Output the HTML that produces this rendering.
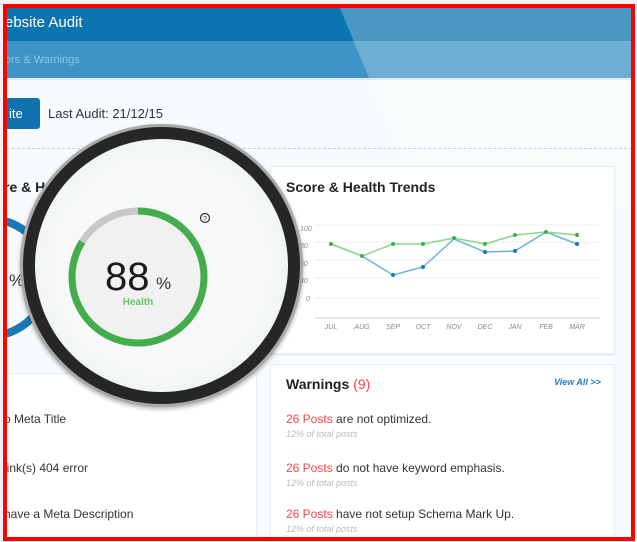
<!DOCTYPE html>
<html><head><style>
*{margin:0;padding:0;box-sizing:border-box}
body{width:637px;height:542px;overflow:hidden;background:#f0f0f0;font-family:"Liberation Sans",sans-serif;position:relative}
.frame{position:absolute;left:3px;top:4px;width:632px;height:537px;border:4px solid #f00;background:#f7fbfd;overflow:hidden}
.a{position:absolute}
</style></head><body>
<div class="frame">
 <div class="a" style="left:0;top:0;width:640px;height:33px;background:#0c74af"></div>
 <div class="a" style="left:0;top:33px;width:640px;height:37px;background:#3d94c5"></div>
 <svg class="a" style="left:0;top:0" width="630" height="200"><polygon points="333,0 640,0 640,70 362,70" fill="#fff" opacity="0.25"/><polygon points="362,70 640,70 640,200 420,200" fill="#fff" opacity="0.25"/></svg>
 <div class="a" style="left:0;top:70px;width:640px;height:2px;background:#e3e8eb"></div>
 <div class="a" style="left:-2px;top:6px;color:#fff;font-size:15px">ebsite Audit</div>
 <div class="a" style="left:-2px;top:46px;color:#8cc4e6;font-size:11px">ors &amp; Warnings</div>
 <div class="a" style="left:-10px;top:90px;width:43px;height:31px;background:#1272b0;border-radius:3px;color:#fff;font-size:13px;line-height:31px;padding-left:12px">ite</div>
 <div class="a" style="left:41px;top:98px;color:#333;font-size:13px">Last Audit: 21/12/15</div>
 <div class="a" style="left:0;top:140px;width:630px;border-top:1px dashed #ccd">&nbsp;</div>
 <div class="a" style="left:-10px;top:158px;width:264px;height:190px;background:#f7fbfd"></div>
 <div class="a" style="left:-3px;top:171px;color:#222;font-size:14px;font-weight:bold">re &amp; Health</div>
 <div class="a" style="left:-80px;top:207px;width:125px;height:125px;border-radius:50%;border:8px solid #1a79b5"></div>
 <div class="a" style="left:2px;top:263px;color:#333;font-size:17px">%</div>
 <div class="a" style="left:-10px;top:365px;width:260px;height:180px;background:#fff;border:1px solid #e8edf0"></div>
 <div class="a" style="left:220px;top:370px;color:#2a7dbf;font-size:10px;font-style:italic">&gt;&gt;</div>
 <div class="a" style="left:-3px;top:404px;color:#333;font-size:12px">o Meta Title</div>
 <div class="a" style="left:-3px;top:453px;color:#333;font-size:12px">link(s) 404 error</div>
 <div class="a" style="left:-3px;top:499px;color:#333;font-size:12px">have a Meta Description</div>
 <div class="a" style="left:263px;top:158px;width:345px;height:188px;background:#fff;border:1px solid #e8edf0;box-shadow:0 1px 2px #e3e7ea"></div>
 <div class="a" style="left:279px;top:171px;color:#222;font-size:14px;font-weight:bold">Score &amp; Health Trends</div>
 <svg class="a" style="left:263px;top:158px" width="345" height="188">
  <g stroke="#eee" stroke-width="1">
   <line x1="45" y1="59" x2="330" y2="59"/><line x1="45" y1="76" x2="330" y2="76"/><line x1="45" y1="94" x2="330" y2="94"/><line x1="45" y1="112" x2="330" y2="112"/><line x1="45" y1="132" x2="330" y2="132"/>
  </g>
  <line x1="45" y1="152" x2="330" y2="152" stroke="#ccc"/>
  <g font-size="7" font-style="italic" fill="#888" font-family="Liberation Sans">
   <text x="30" y="65">100</text><text x="30" y="82">80</text><text x="30" y="100">60</text><text x="30" y="117">40</text><text x="36" y="135">0</text>
  </g>
  <g font-size="7" font-style="italic" fill="#888" text-anchor="middle" font-family="Liberation Sans">
   <text x="61" y="163">JUL</text><text x="92" y="163">AUG</text><text x="123" y="163">SEP</text><text x="153" y="163">OCT</text><text x="184" y="163">NOV</text><text x="215" y="163">DEC</text><text x="245" y="163">JAN</text><text x="276" y="163">FEB</text><text x="307" y="163">MAR</text>
  </g>
  <polyline fill="none" stroke="#6db3e0" stroke-width="1.5" points="61,78 92,90 123,109 153,101 184,73 215,86 245,85 276,66 307,78"/>
  <polyline fill="none" stroke="#8cd68c" stroke-width="1.5" points="61,78 92,90 123,78 153,78 184,72 215,78 245,69 276,66 307,69"/>
  <g fill="#1b75bb"><circle cx="123" cy="109" r="2"/><circle cx="153" cy="101" r="2"/><circle cx="215" cy="86" r="2"/><circle cx="245" cy="85" r="2"/><circle cx="307" cy="78" r="2"/></g>
  <g fill="#3fae49"><circle cx="61" cy="78" r="2"/><circle cx="92" cy="90" r="2"/><circle cx="123" cy="78" r="2"/><circle cx="153" cy="78" r="2"/><circle cx="184" cy="72" r="2"/><circle cx="215" cy="78" r="2"/><circle cx="245" cy="69" r="2"/><circle cx="276" cy="66" r="2"/><circle cx="307" cy="69" r="2"/></g>
 </svg>
 <div class="a" style="left:263px;top:356px;width:345px;height:190px;background:#fff;border:1px solid #e8edf0"></div>
 <div class="a" style="left:279px;top:368px;color:#222;font-size:14px;font-weight:bold">Warnings <span style="color:#f44;font-weight:normal">(9)</span></div>
 <div class="a" style="left:547px;top:369px;color:#2a7dbf;font-size:9px;font-style:italic;font-weight:bold">View All &gt;&gt;</div>
 <div class="a" style="left:279px;top:404px;color:#333;font-size:12px"><span style="color:#f44">26 Posts</span> are not optimized.</div>
 <div class="a" style="left:279px;top:421px;color:#bbb;font-size:9px;font-style:italic">12% of total posts</div>
 <div class="a" style="left:279px;top:453px;color:#333;font-size:12px"><span style="color:#f44">26 Posts</span> do not have keyword emphasis.</div>
 <div class="a" style="left:279px;top:470px;color:#bbb;font-size:9px;font-style:italic">12% of total posts</div>
 <div class="a" style="left:279px;top:499px;color:#333;font-size:12px"><span style="color:#f44">26 Posts</span> have not setup Schema Mark Up.</div>
 <div class="a" style="left:279px;top:516px;color:#bbb;font-size:9px;font-style:italic">12% of total posts</div>
 <div class="a" style="left:13px;top:116px;width:283px;height:283px;border-radius:50%;background:#a9a9a9;box-shadow:0 2px 4px rgba(0,0,0,.3)"></div>
 <div class="a" style="left:16px;top:119px;width:277px;height:277px;border-radius:50%;background:#262626"></div>
 <div class="a" style="left:28px;top:131px;width:253px;height:253px;border-radius:50%;background:radial-gradient(circle,#f6f8f9 60%,#e6ebee 100%)"></div>
 <svg class="a" style="left:28px;top:131px" width="253" height="253">
  <circle cx="103" cy="138" r="66" fill="#f1f1f1"/>
  <circle cx="103" cy="138" r="66" fill="none" stroke="#c8c8c8" stroke-width="7"/>
  <circle cx="103" cy="138" r="66" fill="none" stroke="#44ad4b" stroke-width="7" stroke-dasharray="348 500" transform="rotate(-90 103 138)"/>
  <circle cx="170" cy="79" r="4.5" fill="none" stroke="#333" stroke-width="1.2"/>
  <text x="170" y="82" font-size="7" text-anchor="middle" fill="#333" font-family="Liberation Sans">?</text>
  <text x="70" y="151" font-size="40" fill="#1a1a1a" font-family="Liberation Sans">88</text>
  <text x="121" y="150" font-size="17" fill="#333" font-family="Liberation Sans">%</text>
  <text x="103" y="166" font-size="10" font-weight="bold" fill="#6cbf6c" text-anchor="middle" font-family="Liberation Sans">Health</text>
 </svg>
</div>
</body></html>
